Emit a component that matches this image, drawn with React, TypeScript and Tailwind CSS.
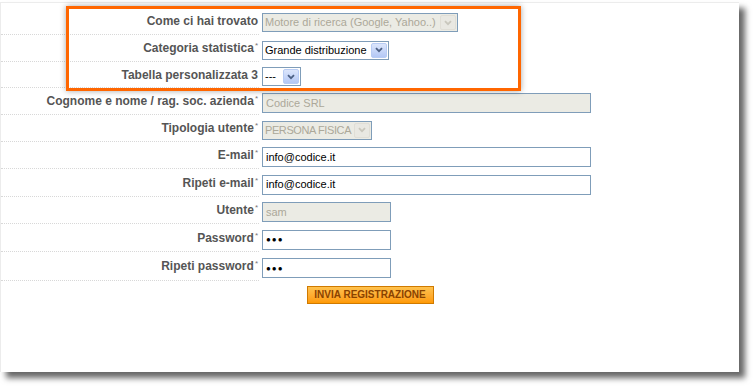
import type { ReactNode } from "react";

type Row = {
  label: string;
  required?: boolean;
  h: number;
  field: ReactNode;
};

const font = { fontFamily: '"Liberation Sans", Arial, sans-serif' };

/** XP-style select box, drawn with divs. */
function Select({
  value,
  width,
  disabled = false,
  tight = false,
}: {
  value: string;
  width: number;
  disabled?: boolean;
  tight?: boolean;
}) {
  return (
    <div
      className={`flex h-[19px] items-center justify-between border border-[#7f9db9] pl-[2px] pr-[1px] text-[11px] ${
        disabled ? "bg-[#ebebe4] text-[#aca899]" : "bg-white text-black"
      }`}
      style={{ width }}
    >
      <span
        className={`whitespace-nowrap leading-none ${tight ? "tracking-[-0.4px]" : ""}`}
      >
        {value}
      </span>
      <span
        className={`flex h-[15px] w-[16px] shrink-0 items-center justify-center rounded-[2px] border ${
          disabled
            ? "border-[#e0ded6] bg-[#e9e8e2]"
            : "border-[#b8ccf4] bg-gradient-to-b from-[#dce6fc] to-[#b4c8f5]"
        }`}
      >
        <svg width="8" height="6" viewBox="0 0 8 6">
          <path
            d="M1 1.2 L4 4.2 L7 1.2"
            fill="none"
            stroke={disabled ? "#c9c7bd" : "#4d6185"}
            strokeWidth="1.8"
          />
        </svg>
      </span>
    </div>
  );
}

function Input({
  value,
  width,
  disabled = false,
  password = false,
}: {
  value: string;
  width: number;
  disabled?: boolean;
  password?: boolean;
}) {
  return (
    <div
      className={`flex h-[20px] items-center border border-[#7f9db9] pl-[3px] text-[11px] ${
        disabled ? "bg-[#ebebe4] text-[#aca899]" : "bg-white text-black"
      }`}
      style={{ width }}
    >
      {password ? (
        <span className="pt-[1px] text-[8px] leading-none tracking-[1px]">
          ●●●
        </span>
      ) : (
        <span className="whitespace-nowrap leading-none">{value}</span>
      )}
    </div>
  );
}

const rows: Row[] = [
  {
    label: "Come ci hai trovato",
    h: 28,
    field: (
      <Select value="Motore di ricerca (Google, Yahoo..)" width={196} disabled />
    ),
  },
  {
    label: "Categoria statistica",
    required: true,
    h: 27,
    field: <Select value="Grande distribuzione" width={127} />,
  },
  {
    label: "Tabella personalizzata 3",
    h: 26,
    field: <Select value="---" width={39} />,
  },
  {
    label: "Cognome e nome / rag. soc. azienda",
    required: true,
    h: 27,
    field: <Input value="Codice SRL" width={329} disabled />,
  },
  {
    label: "Tipologia utente",
    required: true,
    h: 27,
    field: <Select value="PERSONA FISICA" width={110} disabled tight />,
  },
  {
    label: "E-mail",
    required: true,
    h: 27,
    field: <Input value="info@codice.it" width={329} />,
  },
  {
    label: "Ripeti e-mail",
    required: true,
    h: 28,
    field: <Input value="info@codice.it" width={329} />,
  },
  {
    label: "Utente",
    required: true,
    h: 27,
    field: <Input value="sam" width={129} disabled />,
  },
  {
    label: "Password",
    required: true,
    h: 28,
    field: <Input value="" width={129} password />,
  },
  {
    label: "Ripeti password",
    required: true,
    h: 29,
    field: <Input value="" width={129} password />,
  },
];

export default function App() {
  return (
    <div className="h-[386px] w-[753px] bg-white" style={font}>
      <div className="relative mt-[2px] h-[370px] w-[739px] border-l border-t border-[#ececec] bg-white pt-[4px] shadow-[6px_6px_6px_rgba(0,0,0,0.6)]">
        {rows.map((row) => (
          <div key={row.label} className="flex" style={{ height: row.h }}>
            <div className="flex w-[258px] items-center justify-end border-b border-dotted border-[#d8d8d8] pr-[1px] text-[12px] font-bold text-[#555]">
              <span className="whitespace-nowrap">
                {row.label}
                {row.required && (
                  <sup className="ml-[1px] text-[8px] font-normal text-[#777]">
                    *
                  </sup>
                )}
              </span>
            </div>
            <div className="ml-[3px] flex items-center pt-[3px]">
              {row.field}
            </div>
          </div>
        ))}

        {/* Submit */}
        <div className="mt-[5px] flex justify-center">
          <button className="h-[18px] w-[127px] border border-[#d07a00] bg-gradient-to-b from-[#ffc24d] to-[#ff9a00] text-[10px] font-bold leading-none text-[#8a4200]">
            INVIA REGISTRAZIONE
          </button>
        </div>

        {/* Annotation highlight */}
        <div className="absolute left-[65px] top-[3px] h-[85px] w-[455px] border-[3px] border-[#ff6600] shadow-[0_0_6px_rgba(0,0,0,0.35)]" />
      </div>
    </div>
  );
}
